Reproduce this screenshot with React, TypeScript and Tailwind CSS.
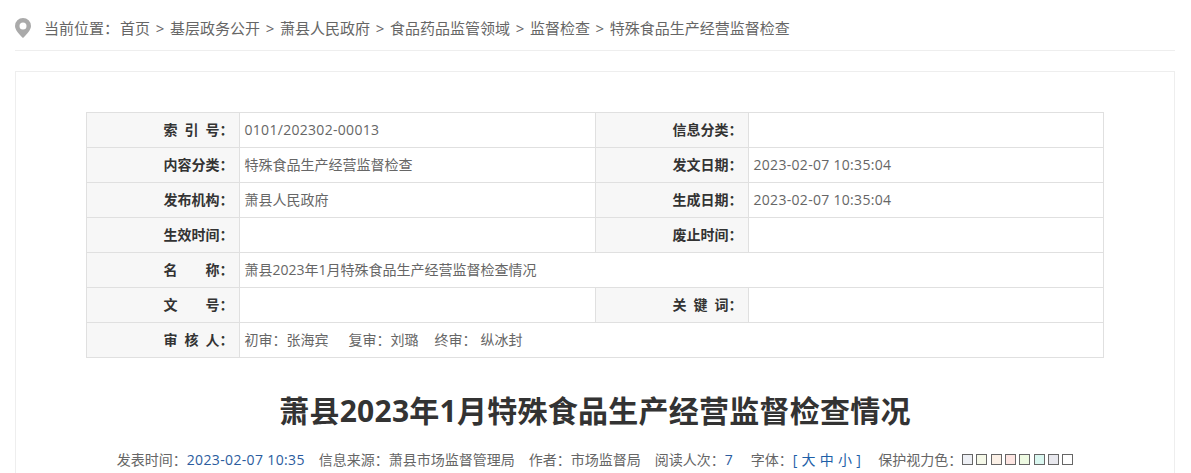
import React from 'react';

const Th: React.FC<{ children?: React.ReactNode }> = ({ children }) => (
    <th className="border border-[#e0e0e0] bg-[#f7f7f7] pr-[5.500px] pb-[2px] text-right text-[14px] font-bold text-[#333] whitespace-pre">
        {children}
    </th>
);

const Td: React.FC<{ children?: React.ReactNode; colSpan?: number }> = ({ children, colSpan }) => (
    <td colSpan={colSpan} className="border border-[#e0e0e0] pb-[2px] pl-[4.500px] text-[14px] text-[#666] whitespace-pre">
        {children}
    </td>
);

const Num: React.FC<{ children?: React.ReactNode }> = ({ children }) => (
    <span className="tracking-[0.3px]">{children}</span>
);

const Sep = () => <span className="mx-[5.700px]">&gt;</span>;

const swatches = ['bg-[#eef0f5]', 'bg-[#f5f8e8]', 'bg-[#fbf0e6]', 'bg-[#fde5e2]', 'bg-[#eefae2]', 'bg-[#daf7f0]', 'bg-[#e8e8ee]', 'bg-white'];

export default function App() {
    return (
        <div className="h-[473px] overflow-hidden bg-white pr-[16px] pl-[15px] font-['Open_Sans','Noto_Sans_CJK_SC',sans-serif]">
            {/* breadcrumb */}
            <div className="flex h-[51px] items-center border-b border-[#eee] pt-[6px] text-[15px] text-[#666]">
                <svg className="h-5 w-4 fill-[#aaa]" viewBox="0 0 16 20">
                    <path fillRule="evenodd" d="M8 0a8 8 0 0 1 8 8c0 4-4.500 8.500-8 12C4.500 16.500 0 12 0 8a8 8 0 0 1 8-8zm0 4.500a3.500 3.500 0 1 0 0 7 3.500 3.500 0 0 0 0-7z" />
                </svg>
                <div className="ml-[13px]">
                    当前位置：<span className="ml-[1px]">首页</span><Sep />基层政务公开<Sep />萧县人民政府<Sep />食品药品监管领域<Sep />监督检查<Sep />特殊食品生产经营监督检查
                </div>
            </div>

            {/* content card */}
            <div className="mt-5 h-[500px] border border-[#eee] px-[70px] pt-10">
                <table className="w-[1017px] table-fixed border-collapse">
                    <colgroup>
                        <col className="w-[153px]" />
                        <col className="w-[356px]" />
                        <col className="w-[153px]" />
                        <col className="w-[355px]" />
                    </colgroup>
                    <tbody>
                        <tr className="h-[35px]"><Th>{'索\u2002引\u2002号：'}</Th><Td><Num>0101/202302-00013</Num></Td><Th>信息分类：</Th><Td /></tr>
                        <tr className="h-[35px]"><Th>内容分类：</Th><Td>特殊食品生产经营监督检查</Td><Th>发文日期：</Th><Td><Num>2023-02-07 10:35:04</Num></Td></tr>
                        <tr className="h-[35px]"><Th>发布机构：</Th><Td>萧县人民政府</Td><Th>生成日期：</Th><Td><Num>2023-02-07 10:35:04</Num></Td></tr>
                        <tr className="h-[35px]"><Th>生效时间：</Th><Td /><Th>废止时间：</Th><Td /></tr>
                        <tr className="h-[35px]"><Th>{'名\u2003\u2003称：'}</Th><Td colSpan={3}>萧县2023年1月特殊食品生产经营监督检查情况</Td></tr>
                        <tr className="h-[35px]"><Th>{'文\u2003\u2003号：'}</Th><Td /><Th>{'关\u2002键\u2002词：'}</Th><Td /></tr>
                        <tr className="h-[35px]">
                            <Th>{'审\u2002核\u2002人：'}</Th>
                            <Td colSpan={3}>
                                初审：张海宾<span className="ml-[20px]">复审：刘璐</span>
                                <span className="ml-[16px]">终审：<span className="ml-[4px]">纵冰封</span></span>
                            </Td>
                        </tr>
                    </tbody>
                </table>

                <h1 className="mt-[30px] text-center text-[30px] leading-[45px] font-bold tracking-[0.26px] text-[#333]">
                    萧县2023年1月特殊食品生产经营监督检查情况
                </h1>

                <div className="mt-[16px] flex items-center justify-center text-[14px] text-[#666]">
                    <span>发表时间：<span className="tracking-[0.35px] text-[#2b5c9e]">2023-02-07 10:35</span></span>
                    <span className="ml-[14px]">信息来源：萧县市场监督管理局</span>
                    <span className="ml-[14px]">作者：市场监督局</span>
                    <span className="ml-[14px]">阅读人次：<span className="text-[#2b5c9e]">7</span></span>
                    <span className="ml-[18px]">字体：<span className="tracking-[0.3px] text-[#1e5fa8]">[ 大 中 小 ]</span></span>
                    <span className="ml-[17px] flex items-center">
                        保护视力色：
                        <span className="flex gap-[3.3px]">
                            {swatches.map((c) => (
                                <span key={c} className={`h-[11px] w-[11px] border border-[#666] ${c}`} />
                            ))}
                        </span>
                    </span>
                </div>
            </div>
        </div>
    );
}
